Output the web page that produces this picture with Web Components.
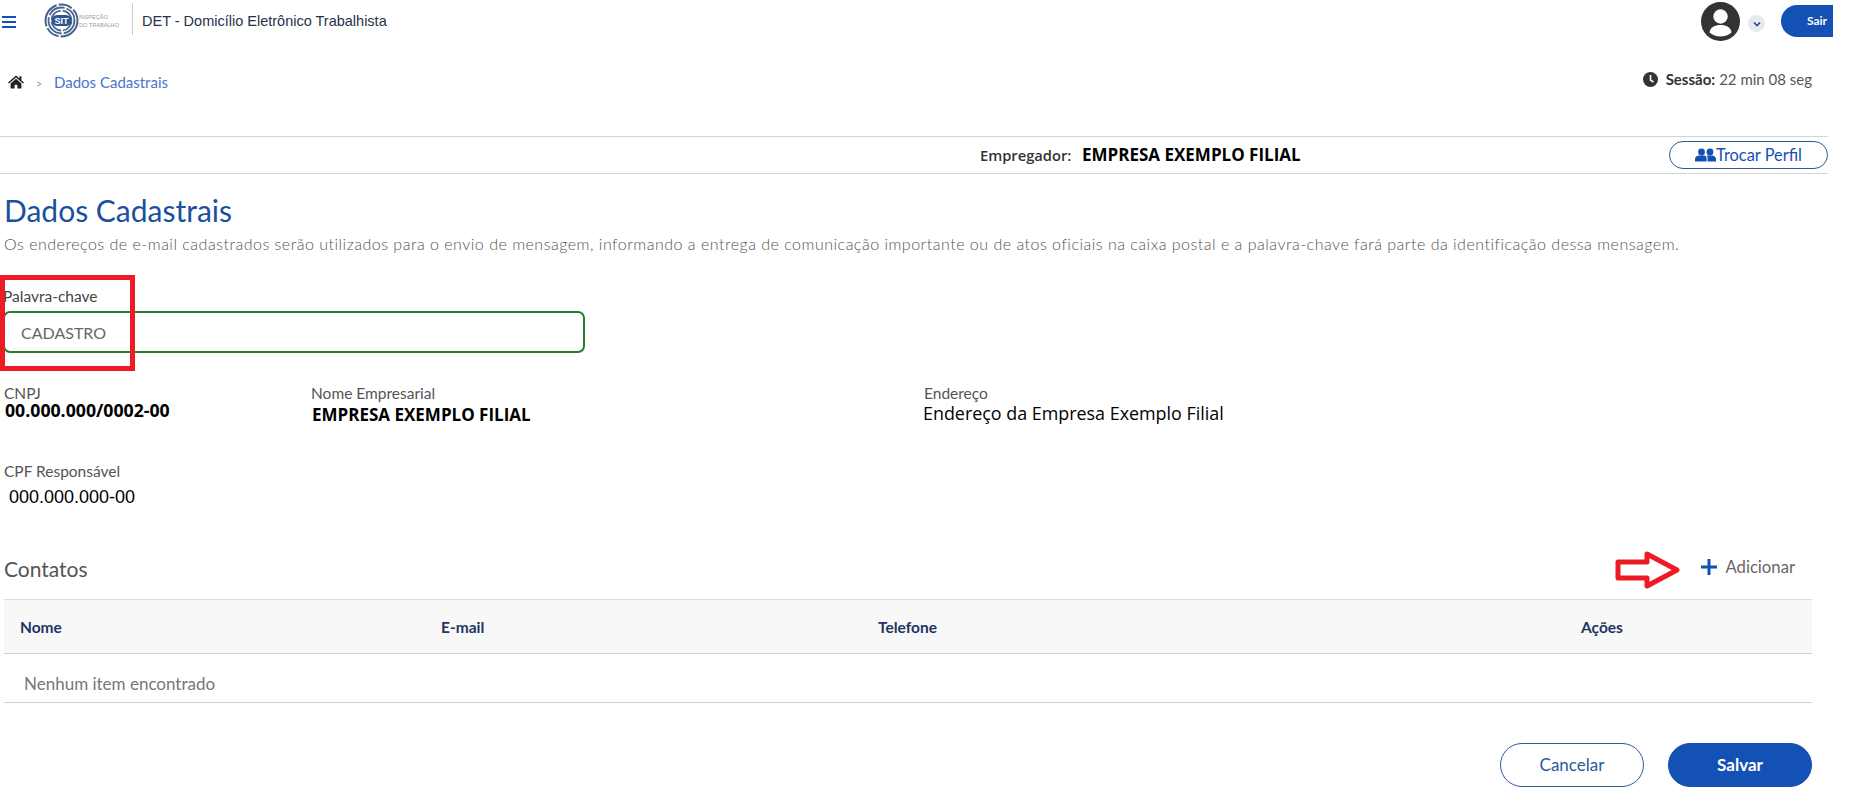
<!DOCTYPE html>
<html lang="pt-BR">
<head>
<meta charset="utf-8">
<title>Dados Cadastrais</title>
<style>
  html, body { margin: 0; padding: 0; background: #fff; }
  body { font-family: "Lato", "Open Sans", sans-serif; color: #555; width: 1851px; height: 799px; overflow: hidden; }
</style>
</head>
<body>
<det-page>
  <det-header slot="header"></det-header>
  <det-crumbs slot="crumbs"></det-crumbs>
  <det-employer slot="employer" name="EMPRESA EXEMPLO FILIAL"></det-employer>

  <h-title slot="main">Dados Cadastrais</h-title>
  <det-intro slot="main">Os endereços de e-mail cadastrados serão utilizados para o envio de mensagem, informando a entrega de comunicação importante ou de atos oficiais na caixa postal e a palavra-chave fará parte da identificação dessa mensagem.</det-intro>
  <det-keyword slot="main" label="Palavra-chave" value="CADASTRO"></det-keyword>
  <det-info slot="main"></det-info>
  <det-contacts slot="main"></det-contacts>
  <det-actions slot="main"></det-actions>
</det-page>

<script>
const FONT = '"Lato", "Open Sans", sans-serif';
const BLUE = '#1351b4';

class DetPage extends HTMLElement {
  constructor() {
    super();
    this.attachShadow({ mode: 'open' });
    this.shadowRoot.innerHTML = `
      <style>
        :host { display: block; width: 1851px; }
        main { display: block; padding: 14px 39px 0 4px; }
      </style>
      <slot name="header"></slot>
      <slot name="crumbs"></slot>
      <slot name="employer"></slot>
      <main><slot name="main"></slot></main>
    `;
  }
}

class DetHeader extends HTMLElement {
  constructor() {
    super();
    this.attachShadow({ mode: 'open' });
    this.shadowRoot.innerHTML = `
      <style>
        :host { display: flex; align-items: flex-start; height: 46px; width: 1833px; }
        .burger { width: 14px; height: 12px; margin: 16px 0 0 2px; display: flex; flex-direction: column; justify-content: space-between; }
        .burger i { display: block; height: 2px; background: ${BLUE}; }
        .logo { margin: 2px 0 0 28px; display: flex; align-items: center; width: 88px; height: 36px; }
        .logo svg { display: block; }
        .rule { width: 1px; height: 32px; margin: 3px 0 0 0; background: #ccc; }
        .title { margin: 11px 0 0 9px; font: 14.5px/20px "Liberation Sans", Arial, sans-serif; color: #27324a; white-space: nowrap; }
        .spacer { flex: 1; }
        .avatar { margin-top: 2px; width: 39px; height: 39px; }
        .chev { width: 17px; height: 17px; border-radius: 50%; background: #e8e9ee; margin: 15px 0 0 8px; display: flex; align-items: center; justify-content: center; }
        .sair { margin: 5px 0 0 16px; width: 52px; height: 32px; box-sizing: border-box; padding: 0 6px 0 0; border-radius: 16px 0 0 16px; background: ${BLUE}; color: #fff; font: 700 12px/32px ${FONT}; text-align: right; }
      </style>
      <div class="burger"><i></i><i></i><i></i></div>
      <div class="logo">
        <svg width="88" height="36" viewBox="0 0 88 36">
          <g fill="none" stroke="#47648f">
            <circle cx="17.500" cy="18.500" r="16" stroke-width="2" stroke-dasharray="26 2 14 2"/>
            <circle cx="17.500" cy="18.500" r="13" stroke-width="1.800" stroke-dasharray="18 2 24 2"/>
            <circle cx="17.500" cy="18.500" r="10" stroke-width="1.800" stroke-dasharray="14 2"/>
          </g>
          <rect x="7.500" y="13" width="20" height="11" rx="5.500" fill="#2f5591"/>
          <text x="17.500" y="21.800" text-anchor="middle" font-family="Liberation Sans" font-weight="700" font-size="9" fill="#fff">SIT</text>
          <text x="35" y="16.500" font-family="Liberation Sans" font-size="5.600" fill="#999">INSPEÇÃO</text>
          <text x="35" y="24.500" font-family="Liberation Sans" font-size="5.600" fill="#999">DO TRABALHO</text>
        </svg>
      </div>
      <div class="rule"></div>
      <div class="title">DET - Domicílio Eletrônico Trabalhista</div>
      <div class="spacer"></div>
      <svg class="avatar" viewBox="0 0 39 39">
        <circle cx="19.5" cy="19.5" r="19.5" fill="#333"/>
        <circle cx="19.5" cy="14.5" r="7.2" fill="#fff"/>
        <path d="M8.5 30.5c1-5.5 5-7.5 11-7.5s10 2 11 7.5c-3 2.7-7 4-11 4s-8-1.3-11-4z" fill="#fff"/>
      </svg>
      <div class="chev"><svg width="10" height="10" viewBox="0 0 10 10"><path d="M2 3.5 5 6.5 8 3.5" fill="none" stroke="#2a4a8c" stroke-width="1.6"/></svg></div>
      <div class="sair">Sair</div>
    `;
  }
}

class DetCrumbs extends HTMLElement {
  constructor() {
    super();
    this.attachShadow({ mode: 'open' });
    this.shadowRoot.innerHTML = `
      <style>
        :host { display: flex; align-items: center; height: 32px; margin-top: 20px; width: 1812px; font: 15px/20px ${FONT}; }
        svg.home { margin-left: 8px; }
        .sep { margin: 3px 0 0 12px; color: #999; font-size: 11px; width: 18px; }
        a { color: #4a73d0; }
        .spacer { flex: 1; }
        .session { display: flex; align-items: center; margin-top: -6px; }
        .clock { margin-right: 8px; }
        b { color: #333; font-weight: 700; margin-right: 4px; }
        .time { color: #555; }
      </style>
      <svg class="home" width="16" height="14" viewBox="0 0 16 14">
        <path d="M8 .6 0 7.4l1 1.1L8 2.6l7 5.9 1-1.1-2.6-2.2V1.2h-2v2.4z" fill="#222"/>
        <path d="M8 3.8 2.6 8.4v5h4v-3.6h2.8v3.6h4v-5z" fill="#222"/>
      </svg>
      <span class="sep">&gt;</span>
      <a>Dados Cadastrais</a>
      <span class="spacer"></span>
      <div class="session">
        <svg class="clock" width="15" height="15" viewBox="0 0 15 15">
          <circle cx="7.5" cy="7.5" r="7.5" fill="#333"/>
          <path d="M7.5 3v5l3 2.2" fill="none" stroke="#fff" stroke-width="1.6"/>
        </svg>
        <span><b>Sessão:</b><span class="time">22 min 08 seg</span></span>
      </div>
    `;
  }
}

class DetEmployer extends HTMLElement {
  constructor() {
    super();
    this.attachShadow({ mode: 'open' });
    this.shadowRoot.innerHTML = `
      <style>
        :host { display: flex; align-items: center; box-sizing: border-box; width: 1828px; height: 38px; margin-top: 38px; border-top: 1px solid #d4d4d4; border-bottom: 1px solid #d4d4d4; }
        .who { margin-left: 980px; font: 600 14.7px/20px "Open Sans", sans-serif; color: #333; width: 102px; white-space: nowrap; }
        .name { font: 700 17px/20px "Open Sans", sans-serif; color: #000; white-space: nowrap; }
        .spacer { flex: 1; }
        button { box-sizing: border-box; width: 159px; height: 28px; border: 1px solid #2b5a9e; border-radius: 14px; background: #fff; color: ${BLUE}; font: 16.4px/20px ${FONT}; display: flex; align-items: center; justify-content: center; gap: 0; padding: 0; }
      </style>
      <span class="who">Empregador:</span>
      <span class="name">${this.getAttribute('name')}</span>
      <span class="spacer"></span>
      <button>
        <svg width="21" height="14" viewBox="0 0 21 14">
          <circle cx="6.5" cy="4" r="3.4" fill="${BLUE}"/>
          <circle cx="15" cy="4" r="3.4" fill="${BLUE}"/>
          <path d="M0 13.5V11c0-2.3 2-3.6 4-3.6h5c2 0 2.6 1.3 2.6 3.6v2.5z" fill="${BLUE}"/>
          <path d="M12.6 13.5V10c0-1-.2-1.8-.7-2.6h5.1c2.2 0 4 1.3 4 3.6v2.5z" fill="${BLUE}"/>
        </svg>Trocar Perfil
      </button>
    `;
  }
}

class HTitle extends HTMLElement {
  constructor() {
    super();
    this.attachShadow({ mode: 'open' });
    this.shadowRoot.innerHTML = `
      <style>:host { display: block; font: 30px/44px ${FONT}; color: #1b4f9f; }</style>
      <slot></slot>
    `;
  }
}

class DetIntro extends HTMLElement {
  constructor() {
    super();
    this.attachShadow({ mode: 'open' });
    this.shadowRoot.innerHTML = `
      <style>:host { display: block; margin-top: 2px; font: 300 16px/20px ${FONT}; color: #555; white-space: nowrap; letter-spacing: .5px; }</style>
      <slot></slot>
    `;
  }
}

class DetKeyword extends HTMLElement {
  constructor() {
    super();
    this.attachShadow({ mode: 'open' });
    this.shadowRoot.innerHTML = `
      <style>
        :host { display: block; position: relative; margin: 33px 0 0 -1px; font-family: ${FONT}; }
        label { display: block; font-size: 15.5px; line-height: 18px; color: #444; }
        .box { box-sizing: border-box; width: 582px; height: 42px; margin-top: 6px; border: 2px solid #2a7d2e; border-radius: 7px; padding: 1px 16px 0; font-size: 16px; line-height: 38px; color: #666; }
        .mark { position: absolute; left: -3px; top: -12px; width: 135px; height: 96px; box-sizing: border-box; border: 5px solid #ed1c24; }
      </style>
      <label>${this.getAttribute('label')}</label>
      <div class="box">${this.getAttribute('value')}</div>
      <div class="mark"></div>
    `;
  }
}

class DetDatum extends HTMLElement {
  static get observedAttributes() {
    return ['label', 'gap', 'indent', 'font'];
  }

  constructor() {
    super();
    this.attachShadow({ mode: 'open' });
    this.shadowRoot.innerHTML = `
      <style>
        :host { display: block; }
        .k { font: 15.5px/18px ${FONT}; color: #555; }
        .v { white-space: nowrap; color: #000; line-height: 20px; }
      </style>
      <div class="k"></div>
      <div class="v"><slot></slot></div>
    `;
  }

  attributeChangedCallback(name, oldValue, newValue) {
    const v = this.shadowRoot.querySelector('.v');
    if (name === 'label') this.shadowRoot.querySelector('.k').textContent = newValue;
    if (name === 'gap') v.style.marginTop = newValue + 'px';
    if (name === 'indent') v.style.marginLeft = newValue + 'px';
    if (name === 'font') v.style.font = newValue;
  }
}

class DetInfo extends HTMLElement {
  constructor() {
    super();
    this.attachShadow({ mode: 'open' });
    this.shadowRoot.innerHTML = `
      <style>
        :host { display: grid; grid-template-columns: 307px 613px 1fr; grid-template-rows: 78px auto; margin-top: 31px; }
      </style>
      <det-datum label="CNPJ" indent="1" gap="0" font='700 17.7px/17px "Open Sans", sans-serif'>00.000.000/0002-00</det-datum>
      <det-datum label="Nome Empresarial" indent="1" gap="3" font='700 17px/20px "Open Sans", sans-serif'>EMPRESA EXEMPLO FILIAL</det-datum>
      <det-datum label="Endereço" indent="-1" gap="1" font='17.9px/20px "Open Sans", sans-serif'>Endereço da Empresa Exemplo Filial</det-datum>
      <det-datum label="CPF Responsável" indent="5" gap="7" font='18px/20px "Liberation Sans", sans-serif'>000.000.000-00</det-datum>
    `;
  }
}

class DetContacts extends HTMLElement {
  constructor() {
    super();
    this.attachShadow({ mode: 'open' });
    this.shadowRoot.innerHTML = `
      <style>
        :host { display: block; position: relative; margin-top: 44px; font-family: ${FONT}; }
        .top { display: flex; align-items: center; height: 36px; margin-bottom: 12px; }
        h2 { margin: 0; font-size: 21px; font-weight: 400; color: #555; line-height: 36px; flex: 1; }
        .add { display: flex; align-items: center; margin: -4px 17px 0 0; font-size: 16.7px; color: #666; gap: 8px; }
        .arrow { position: absolute; left: 1611px; top: 0; }
        .row { display: grid; grid-template-columns: 421px 437px 703px 1fr; align-items: center; padding-left: 16px; box-sizing: border-box; }
        .head { height: 55px; background: #f8f8f8; border-top: 1px solid #dcdcdc; border-bottom: 1px solid #cfd0da; font-size: 15.5px; font-weight: 700; color: #1f3464; }
        .empty { height: 49px; border-bottom: 1px solid #cfd0da; padding: 10px 0 0 20px; font-size: 17px; color: #777; display: flex; align-items: center; box-sizing: border-box; }
      </style>
      <div class="top">
        <h2>Contatos</h2>
        <div class="add">
          <svg width="16" height="16" viewBox="0 0 16 16"><path d="M6.5 0h3v6.5H16v3H9.500V16h-3V9.500H0v-3h6.500z" fill="${BLUE}"/></svg>
          <span>Adicionar</span>
        </div>
      </div>
      <svg class="arrow" width="66" height="38" viewBox="0 0 66 38">
        <path d="M3 11H32V3L62 19 32 35V27H3z" fill="none" stroke="#ed1c24" stroke-width="5" stroke-linejoin="round"/>
      </svg>
      <div class="row head"><span>Nome</span><span>E-mail</span><span>Telefone</span><span>Ações</span></div>
      <div class="empty">Nenhum item encontrado</div>
    `;
  }
}

class DetButton extends HTMLElement {
  constructor() {
    super();
    this.attachShadow({ mode: 'open' });
    this.shadowRoot.innerHTML = `
      <style>
        :host { display: flex; align-items: center; justify-content: center; box-sizing: border-box; width: 144px; height: 44px; border-radius: 22px; border: 1px solid #2b5a9e; color: #2b5a9e; font: 17px/20px ${FONT}; }
        :host([primary]) { background: ${BLUE}; border-color: ${BLUE}; color: #fff; font-weight: 700; }
      </style>
      <slot></slot>
    `;
  }
}

class DetActions extends HTMLElement {
  constructor() {
    super();
    this.attachShadow({ mode: 'open' });
    this.shadowRoot.innerHTML = `
      <style>:host { display: flex; justify-content: flex-end; gap: 24px; margin-top: 40px; }</style>
      <det-button>Cancelar</det-button>
      <det-button primary>Salvar</det-button>
    `;
  }
}

customElements.define('det-page', DetPage);
customElements.define('det-header', DetHeader);
customElements.define('det-crumbs', DetCrumbs);
customElements.define('det-employer', DetEmployer);
customElements.define('h-title', HTitle);
customElements.define('det-intro', DetIntro);
customElements.define('det-keyword', DetKeyword);
customElements.define('det-datum', DetDatum);
customElements.define('det-info', DetInfo);
customElements.define('det-contacts', DetContacts);
customElements.define('det-button', DetButton);
customElements.define('det-actions', DetActions);
</script>
</body>
</html>
